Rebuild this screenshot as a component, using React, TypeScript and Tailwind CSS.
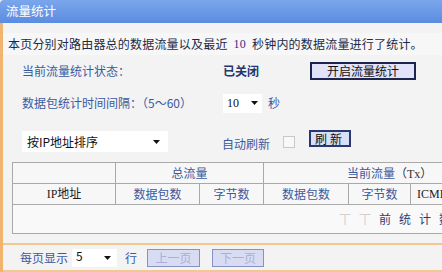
import React from 'react';

const cjk = { fontFamily: '"Noto Sans CJK SC", "Noto Sans", sans-serif' };
const serif = { fontFamily: '"Liberation Serif", "Noto Sans CJK SC", serif' };

function Caret() {
  return (
    <svg width="7" height="4" viewBox="0 0 7 4" className="shrink-0">
      <path d="M0 0 L7 0 L3.5 4 Z" fill="#111" />
    </svg>
  );
}

export default function App() {
  return (
    <div className="w-[442px] h-[272px] overflow-hidden bg-[#f3f3f3] text-[12px] leading-none" style={cjk}>
      {/* Title */}
      <div className="h-[23px] flex items-center px-[6px] text-white text-[12.5px] rounded-tl-[4px] bg-gradient-to-b from-[#7aa6ec] to-[#5b8ce0]">
        流量统计
      </div>

      <div className="border-l-[3px] border-[#f0b46e] h-[249px] flex flex-col">
        {/* Intro */}
        <div className="h-[22px] mt-[10px] flex items-center pl-[5px] text-[#1c2a48] bg-[#f7f7f7] tracking-[0.2px]">
          本页分别对路由器总的数据流量以及最近
          <span className="mx-[6px] text-[#3a2a8a] text-[12px]" style={serif}>10</span>
          秒钟内的数据流量进行了统计。
        </div>

        {/* Status */}
        <div className="h-[22px] mt-[5px] flex items-center">
          <span className="w-[220px] pl-[19px] text-[#3a5aa0]">当前流量统计状态：</span>
          <span className="w-[87px] font-bold text-[#22386e]">已关闭</span>
          <button className="w-[106px] h-[18px] bg-[#e2e2f8] border-2 border-[#1e2450] text-[#111] text-[12px] flex items-center justify-center">
            开启流量统计
          </button>
        </div>

        {/* Interval */}
        <div className="h-[22px] mt-[10px] flex items-center">
          <span className="w-[220px] pl-[19px] text-[#3a5aa0]">
            数据包统计时间间隔：（5～60）
          </span>
          <div className="w-[39px] h-[19px] bg-white flex items-center justify-between px-[4px] text-[#111]" style={serif}>
            <span>10</span>
            <Caret />
          </div>
          <span className="ml-[6px] text-[#3a5aa0]">秒</span>
        </div>

        {/* Sort / refresh */}
        <div className="h-[24px] mt-[16px] flex items-start">
          <div className="ml-[19px] w-[146px] h-[21px] mt-[1px] bg-white flex items-center justify-between pl-[5px] pr-[8px] text-[#111]">
            <span>按IP地址排序</span>
            <Caret />
          </div>
          <span className="ml-[54px] mt-[8px] text-[#3a5aa0]">自动刷新</span>
          <span className="ml-[13px] mt-[6px] w-[12px] h-[12px] border border-[#c8c8c8] bg-[#f8f8f8]" />
          <button className="ml-[14px] w-[42px] h-[17px] bg-[#d8e0f8] border-2 border-[#2a3870] text-[#111] text-[12px] flex items-center justify-center tracking-[3px]">
            刷新
          </button>
        </div>

        {/* Table */}
        <div className="mt-[8px] ml-[9px] w-[500px]">
          <table className="border-collapse text-[12px] bg-[#f7f7f7]" style={{ tableLayout: 'fixed' }}>
            <colgroup>
              <col className="w-[103px]" />
              <col className="w-[84px]" />
              <col className="w-[64px]" />
              <col className="w-[85px]" />
              <col className="w-[62px]" />
              <col className="w-[80px]" />
            </colgroup>
            <tbody>
              <tr className="h-[21px]">
                <td className="border border-[#a9a9a9]" />
                <td colSpan={2} className="border border-[#a9a9a9] text-center text-[#3a5aa0]">总流量</td>
                <td colSpan={3} className="border border-[#a9a9a9] text-[#3a5aa0] pl-[83px]">
                  当前流量<span className="text-[#333]" style={serif}>（Tx）</span>
                </td>
              </tr>
              <tr className="h-[21px]">
                <td className="border border-[#a9a9a9] text-center text-[#222]" style={serif}>IP地址</td>
                <td className="border border-[#a9a9a9] text-center text-[#3a5aa0]">数据包数</td>
                <td className="border border-[#a9a9a9] text-center text-[#3a5aa0]">字节数</td>
                <td className="border border-[#a9a9a9] text-center text-[#3a5aa0]">数据包数</td>
                <td className="border border-[#a9a9a9] text-center text-[#3a5aa0]">字节数</td>
                <td className="border border-[#a9a9a9] pl-[6px] text-[#222]" style={serif}>ICMP Tx</td>
              </tr>
              <tr className="h-[29px] bg-[#f9f9f9]">
                <td colSpan={6} className="border border-[#a9a9a9] pl-[326px] text-[#2a3d78] tracking-[8px]">
                  <span className="text-[#d0d0d0]">丅丅</span>前统计数据
                </td>
              </tr>
            </tbody>
          </table>
        </div>

        {/* Footer */}
        <div className="mt-[9px] border-t-2 border-[#f0c890] h-[27px] flex items-center">
          <span className="ml-[17px] text-[#3a5aa0]">每页显示</span>
          <div className="ml-[4px] w-[45px] h-[18px] bg-white flex items-center justify-between pl-[4px] pr-[6px] text-[#111]">
            <span className="-mt-[4px]">5</span>
            <Caret />
          </div>
          <span className="ml-[8px] text-[#3a5aa0]">行</span>
          <button className="ml-[10px] w-[53px] h-[18px] bg-[#d8dcf2] border border-[#8890c8] text-[#a8b0d8] text-[12px] flex items-center justify-center">
            上一页
          </button>
          <button className="ml-[12px] w-[52px] h-[18px] bg-[#d8dcf2] border border-[#8890c8] text-[#a8b0d8] text-[12px] flex items-center justify-center">
            下一页
          </button>
        </div>
        <div className="border-t-2 border-[#f0c890]" />
      </div>
    </div>
  );
}
